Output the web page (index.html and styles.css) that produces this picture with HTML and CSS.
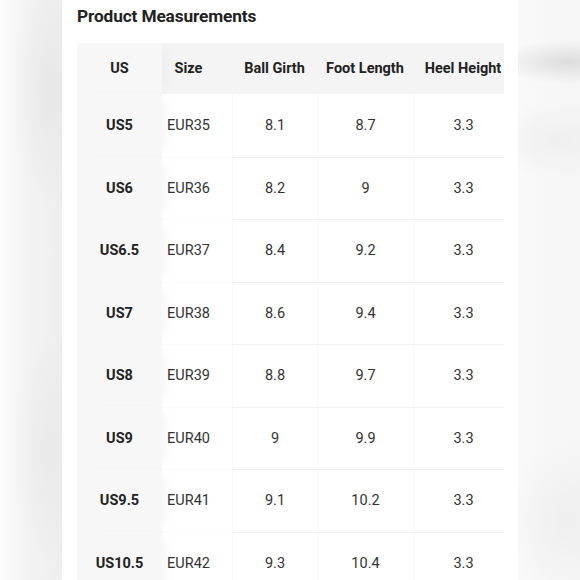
FILE: index.html
```html
<!DOCTYPE html>
<html>
<head>
<meta charset="utf-8">
<link rel="stylesheet" href="styles.css">
</head>
<body>
<div class="page">
  <div class="side side-left"></div>
  <div class="card">
    <h2 class="title">Product Measurements</h2>
    <div class="table-wrap">
      <table class="sizes">
        <colgroup>
          <col class="c-us"><col class="c-size"><col class="c-ball"><col class="c-foot"><col class="c-heel">
        </colgroup>
        <thead>
          <tr>
            <th class="fixed">US</th>
            <th class="size">Size</th>
            <th>Ball Girth</th>
            <th>Foot Length</th>
            <th>Heel Height</th>
          </tr>
        </thead>
        <tbody>
          <tr><td class="fixed">US5</td><td class="size">EUR35</td><td>8.1</td><td>8.7</td><td>3.3</td></tr>
          <tr><td class="fixed">US6</td><td class="size">EUR36</td><td>8.2</td><td>9</td><td>3.3</td></tr>
          <tr><td class="fixed">US6.5</td><td class="size">EUR37</td><td>8.4</td><td>9.2</td><td>3.3</td></tr>
          <tr><td class="fixed">US7</td><td class="size">EUR38</td><td>8.6</td><td>9.4</td><td>3.3</td></tr>
          <tr><td class="fixed">US8</td><td class="size">EUR39</td><td>8.8</td><td>9.7</td><td>3.3</td></tr>
          <tr><td class="fixed">US9</td><td class="size">EUR40</td><td>9</td><td>9.9</td><td>3.3</td></tr>
          <tr><td class="fixed">US9.5</td><td class="size">EUR41</td><td>9.1</td><td>10.2</td><td>3.3</td></tr>
          <tr><td class="fixed">US10.5</td><td class="size">EUR42</td><td>9.3</td><td>10.4</td><td>3.3</td></tr>
        </tbody>
      </table>
    </div>
  </div>
  <div class="side side-right"></div>
</div>
</body>
</html>
```

FILE: styles.css
```css
html, body {
  margin: 0;
  padding: 0;
}
body {
  width: 580px;
  height: 580px;
  overflow: hidden;
  font-family: Roboto, "Liberation Sans", sans-serif;
  background: #f3f3f3;
}
.page {
  display: flex;
  width: 580px;
  height: 580px;
}
.side {
  flex: none;
}
.side-left {
  width: 62px;
  background:
    radial-gradient(ellipse 40px 120px at 50px 90px, rgba(225,225,225,0.6), rgba(225,225,225,0)),
    radial-gradient(ellipse 40px 120px at 50px 450px, rgba(228,228,228,0.6), rgba(228,228,228,0)),
    linear-gradient(to right, #fbfbfb 0px, #f3f3f3 30px, #efefef 60px);
}
.side-right {
  width: 62px;
  background:
    radial-gradient(ellipse 70px 22px at 50px 62px, rgba(218,218,218,0.9), rgba(218,218,218,0)),
    radial-gradient(ellipse 60px 40px at 40px 140px, rgba(235,235,235,0.7), rgba(235,235,235,0)),
    radial-gradient(ellipse 60px 80px at 50px 520px, rgba(236,236,236,0.8), rgba(236,236,236,0)),
    linear-gradient(to right, #f9f9f9 0px, #f6f6f6 62px);
}
.card {
  flex: none;
  width: 456px;
  background: #fff;
  padding: 0 14px 0 15px;
  box-sizing: border-box;
}
.title {
  margin: 0;
  padding-top: 3px;
  height: 38px;
  box-sizing: border-box;
  font-size: 17.25px;
  line-height: 26px;
  font-weight: 700;
  color: #222;
  letter-spacing: -0.12px;
}
.table-wrap {
  width: 427px;
  overflow: hidden;
  margin-top: 5px;
}
.sizes {
  border-collapse: separate;
  border-spacing: 0;
  table-layout: fixed;
  width: 436px;
  font-size: 14.5px;
  color: #333;
}
.c-us { width: 85px; }
.c-size { width: 70px; }
.c-ball { width: 85px; }
.c-foot { width: 96px; }
.c-heel { width: 100px; }
.sizes th {
  height: 51px;
  padding: 0;
  background: #f4f4f4;
  color: #222;
  font-weight: 700;
  text-align: center;
  white-space: nowrap;
}
.sizes td {
  height: 62.5px;
  padding: 0;
  text-align: center;
  border-top: 1px solid #f1f1f1;
  border-left: 1px solid #f8f8f8;
  box-sizing: border-box;
  white-space: nowrap;
}
.sizes tbody tr:first-child td {
  border-top: none;
}
.sizes .fixed {
  position: relative;
  background: #f7f7f7;
  font-weight: 700;
  color: #222;
  border-top-color: #f7f7f7;
  border-left: none;
  box-shadow: 8px 0 12px -6px rgba(0,0,0,0.05);
  z-index: 1;
}
.sizes th.fixed {
  background: #f7f7f7;
}
.sizes .size {
  padding-right: 17px;
  border-left: none;
  border-top-color: #fbfbfb;
}
.sizes th.size {
  padding-right: 17px;
}
```
